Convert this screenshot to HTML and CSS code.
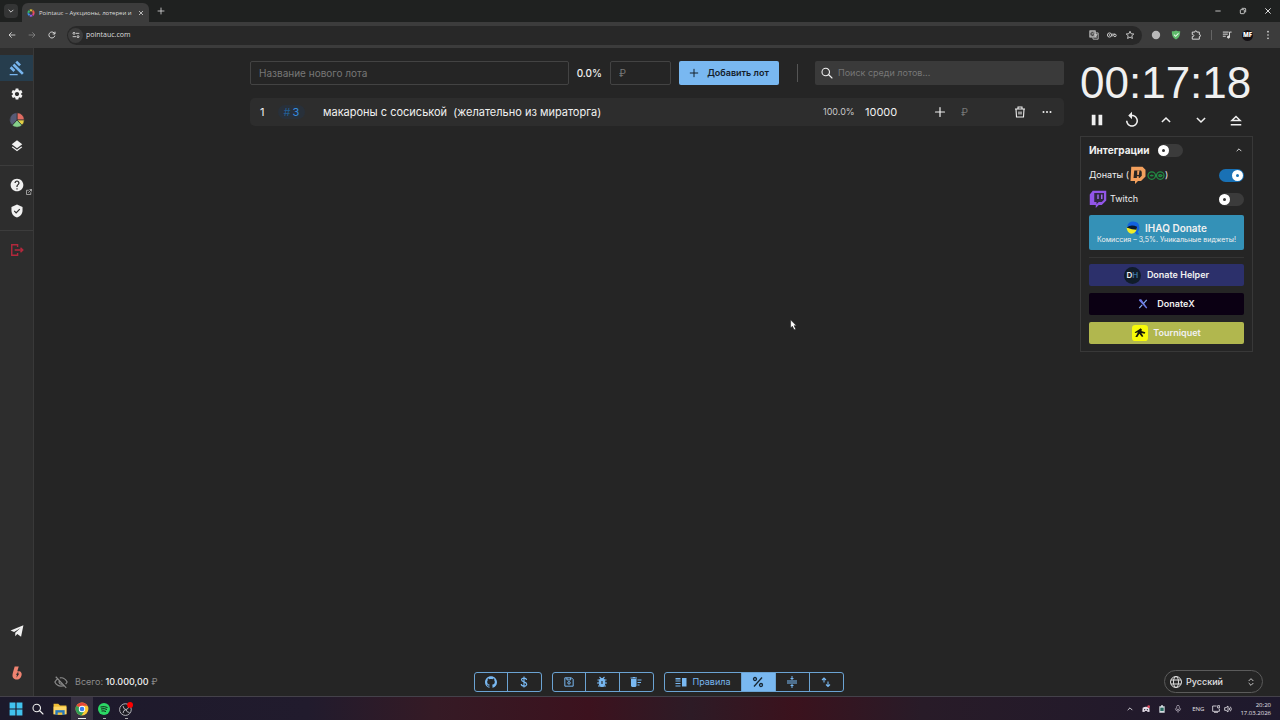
FILE: index.html
```html
<!DOCTYPE html>
<html lang="ru">
<head>
<meta charset="utf-8">
<title>Pointauc – Аукционы, лотереи и</title>
<link rel="stylesheet" href="styles.css">
</head>
<body>
<svg class="defs" aria-hidden="true">
  <symbol id="plus" viewBox="0 0 24 24"><path d="M12 3v18M3 12h18" fill="none" stroke="currentColor" stroke-width="2.400" stroke-linecap="round"/></symbol>
  <symbol id="close" viewBox="0 0 24 24"><path d="M4 4l16 16M20 4L4 20" fill="none" stroke="currentColor" stroke-width="3"/></symbol>
  <symbol id="up" viewBox="0 0 24 24"><path d="M5 15.500l7-7 7 7" fill="none" stroke="currentColor" stroke-width="2.600"/></symbol>
  <symbol id="down" viewBox="0 0 24 24"><path d="M5 8.500l7 7 7-7" fill="none" stroke="currentColor" stroke-width="2.600"/></symbol>
  <symbol id="search" viewBox="0 0 24 24"><path d="M15.500 15.500L22 22M17 10a7.500 7.500 0 1 1-15 0 7.500 7.500 0 0 1 15 0z" fill="none" stroke="currentColor" stroke-width="2.200" stroke-linecap="round"/></symbol>
</svg>

<header class="browser">
  <div class="tabs">
    <button class="tab-search" aria-label="Поиск вкладок"><svg class="i8"><use href="#down"/></svg></button>
    <div class="tab">
      <svg class="i8" viewBox="0 0 24 24" fill="none" stroke-width="6"><circle cx="12" cy="12" r="8" stroke="#e0447c" stroke-dasharray="7 43.300"/><circle cx="12" cy="12" r="8" stroke="#8c5ae0" stroke-dasharray="7 43.300" stroke-dashoffset="-8.400"/><circle cx="12" cy="12" r="8" stroke="#3b8ee8" stroke-dasharray="7 43.300" stroke-dashoffset="-16.800"/><circle cx="12" cy="12" r="8" stroke="#35b96d" stroke-dasharray="7 43.300" stroke-dashoffset="-25.100"/><circle cx="12" cy="12" r="8" stroke="#d8bd3b" stroke-dasharray="7 43.300" stroke-dashoffset="-33.500"/><circle cx="12" cy="12" r="8" stroke="#e55b45" stroke-dasharray="7 43.300" stroke-dashoffset="-41.900"/></svg>
      <span class="tab-title">Pointauc – Аукционы, лотереи и</span>
      <button aria-label="Закрыть вкладку"><svg class="i6"><use href="#close"/></svg></button>
    </div>
    <button class="new-tab" aria-label="Новая вкладка"><svg class="i8"><use href="#plus"/></svg></button>
    <div class="window-buttons">
      <button aria-label="Свернуть"><svg class="i8" viewBox="0 0 24 24"><path d="M4 12h16" stroke="currentColor" stroke-width="2.500"/></svg></button>
      <button aria-label="Развернуть"><svg class="i8" viewBox="0 0 24 24" fill="none" stroke="currentColor" stroke-width="2.500"><rect x="4" y="8" width="12" height="12" rx="2"/><path d="M8 4h10a2 2 0 0 1 2 2v10"/></svg></button>
      <button aria-label="Закрыть"><svg class="i8"><use href="#close"/></svg></button>
    </div>
  </div>
  <div class="toolbar">
    <div class="nav-buttons">
      <button aria-label="Назад"><svg class="i8" viewBox="0 0 24 24" fill="none" stroke="currentColor" stroke-width="2.500"><path d="M22 12H3M11 4l-8 8 8 8"/></svg></button>
      <button class="dim" aria-label="Вперёд"><svg class="i8" viewBox="0 0 24 24" fill="none" stroke="currentColor" stroke-width="2.500"><path d="M2 12h19M13 4l8 8-8 8"/></svg></button>
      <button aria-label="Обновить"><svg class="i8" viewBox="0 0 24 24" fill="none" stroke="currentColor" stroke-width="2.800"><path d="M20.500 14a9 9 0 1 1-2.500-8.500L21 8M21 2v7h-7"/></svg></button>
    </div>
    <div class="address">
      <span class="site-info"><svg class="i8" viewBox="0 0 24 24" fill="none" stroke="currentColor" stroke-width="2.600"><circle cx="6" cy="7" r="3"/><path d="M12 7h10M2 17h10"/><circle cx="18" cy="17" r="3"/></svg></span>
      <input class="url" aria-label="Адрес" value="pointauc.com">
      <div class="address-icons">
        <svg class="i10" viewBox="0 0 24 24" fill="none" stroke="currentColor" stroke-width="2"><rect x="2" y="2" width="13" height="15" fill="#8d8d8d"/><path d="M15 7h7v15H10l-1-4M13 11h7M16.500 9v2M19 11q-2 6-5 7M14 12q2 4 5 6"/><path d="M11 7.500a3.500 3.500 0 1 0 0 4H8.500" stroke="#282828"/></svg>
        <svg class="i10" viewBox="0 0 24 24" fill="none" stroke="currentColor" stroke-width="2.400"><circle cx="6" cy="12" r="5"/><circle cx="6" cy="12" r="1"/><path d="M11 10h8M11 14h3l1-1"/><circle cx="19" cy="13" r="3"/></svg>
        <svg class="i10" viewBox="0 0 24 24" fill="none" stroke="currentColor" stroke-width="2.300"><path d="M12 3l2.700 6 6.500.600-4.900 4.300 1.500 6.400L12 17l-5.800 3.300 1.500-6.400-4.900-4.300 6.500-.600z"/></svg>
      </div>
    </div>
    <div class="extensions">
      <svg class="i10" viewBox="0 0 24 24"><circle cx="12" cy="12" r="10" fill="#b9b9b9"/></svg>
      <svg class="i10" viewBox="0 0 24 24"><path d="M12 1c4 2 7 2 10 2 0 10-2 15-10 20C4 18 2 13 2 3c3 0 6 0 10-2z" fill="#5fbb6b"/><path d="M7 11l4 4 7-7" fill="none" stroke="#e7f7e8" stroke-width="2.500"/></svg>
      <svg class="i10" viewBox="0 0 24 24" fill="none" stroke="currentColor" stroke-width="2.300"><path d="M3 5h6q0-3 2.500-3T14 5h6v6q3 0 3 2.500T20 16v6H3v-6q4 0 4-2.500T3 11z"/></svg>
      <span class="bar"></span>
      <svg class="i10" viewBox="0 0 24 24" fill="none" stroke="currentColor" stroke-width="2.300"><path d="M2 5h14M2 10h12M2 15h7M18 17V5h5"/><circle cx="15.500" cy="17" r="2.500" fill="currentColor"/></svg>
      <span class="avatar">MF</span>
      <svg class="i10" viewBox="0 0 24 24" fill="currentColor"><circle cx="12" cy="4" r="2"/><circle cx="12" cy="12" r="2"/><circle cx="12" cy="20" r="2"/></svg>
    </div>
  </div>
</header>

<div class="app">
  <nav class="sidebar">
    <a class="side active" href="#" aria-label="Аукцион"><svg class="i16" viewBox="0 0 24 24" fill="currentColor"><path d="M1 21h12v2H1zM5.245 8.070l2.830-2.827 14.140 14.142-2.828 2.828zM12.317 1l5.657 5.656-2.830 2.830-5.654-5.660zM3.825 9.485l5.657 5.657-2.828 2.828-5.657-5.657z"/></svg></a>
    <a class="side" href="#" aria-label="Настройки"><svg class="i14" viewBox="0 0 24 24" fill="currentColor"><path d="M19.140 12.940c.040-.300.060-.610.060-.940 0-.320-.020-.640-.070-.940l2.030-1.580c.180-.140.230-.410.120-.610l-1.920-3.320c-.120-.220-.370-.290-.590-.220l-2.390.960c-.500-.380-1.030-.700-1.620-.940l-.360-2.540c-.040-.240-.240-.410-.480-.410h-3.840c-.240 0-.430.170-.470.410l-.360 2.540c-.590.240-1.130.570-1.620.940l-2.390-.960c-.220-.080-.470 0-.590.220L2.740 8.870c-.120.210-.080.470.120.610l2.030 1.580c-.050.300-.090.630-.090.940s.020.640.070.940l-2.030 1.580c-.180.140-.230.410-.120.610l1.920 3.320c.120.220.370.290.590.220l2.390-.960c.500.380 1.030.700 1.620.940l.360 2.540c.050.240.240.410.480.410h3.840c.240 0 .440-.170.470-.410l.360-2.540c.590-.240 1.130-.560 1.620-.940l2.390.960c.220.080.470 0 .590-.220l1.920-3.320c.120-.220.070-.470-.120-.610l-2.010-1.580zM12 15.600c-1.980 0-3.600-1.620-3.600-3.600s1.620-3.600 3.600-3.600 3.600 1.620 3.600 3.600-1.620 3.600-3.600 3.600z"/></svg></a>
    <a class="side" href="#" aria-label="Колесо"><svg class="i16" viewBox="0 0 24 24" stroke="#2d2d2d"><path d="M12 12V1a11 11 0 0 1 11 11z" fill="#e06c62"/><path d="M12 12h11a11 11 0 0 1-3.500 8z" fill="#e3cf45"/><path d="M12 12l7.500 8a11 11 0 0 1-15 0z" fill="#85cf8a"/><path d="M12 12l-7.500 8A11 11 0 0 1 12 1z" fill="#555a76"/></svg></a>
    <a class="side" href="#" aria-label="Слои"><svg class="i14" viewBox="0 0 24 24" fill="currentColor"><path d="M11.990 18.540l-7.370-5.730L3 14.070l9 7 9-7-1.630-1.270-7.380 5.740zM12 16l7.360-5.730L21 9l-9-7-9 7 1.630 1.270L12 16z"/></svg></a>
    <hr>
    <a class="side" href="#" aria-label="Помощь"><svg class="i14" viewBox="1 1 22 22" fill="currentColor"><path d="M12 2C6.480 2 2 6.480 2 12s4.480 10 10 10 10-4.480 10-10S17.520 2 12 2zm1 17h-2v-2h2v2zm2.070-7.750l-.900.920C13.450 12.900 13 13.500 13 15h-2v-.500c0-1.100.450-2.100 1.170-2.830l1.240-1.260c.370-.360.590-.860.590-1.410 0-1.100-.900-2-2-2s-2 .900-2 2H8c0-2.210 1.790-4 4-4s4 1.790 4 4c0 .880-.360 1.680-.930 2.250z"/></svg><svg class="external" viewBox="0 0 24 24" fill="none" stroke="currentColor" stroke-width="3"><path d="M11 5H2v17h17v-9M9 15L22 2M14 2h8v8"/></svg></a>
    <a class="side" href="#" aria-label="Безопасность"><svg class="i14" viewBox="0 0 24 24" fill="currentColor"><path d="M12 1L2.500 5v6c0 5.550 4 10.740 9.500 12 5.500-1.260 9.500-6.450 9.500-12V5zM10.500 16.500l-4-4L8 11l2.500 2.500L16 8l1.500 1.500z"/></svg></a>
    <hr>
    <a class="side logout" href="#" aria-label="Выйти"><svg class="i14" viewBox="0 0 24 24" fill="none" stroke="currentColor" stroke-width="2.400"><path d="M13 7V3H3v18h10v-4M8 12h14M18 8l4 4-4 4"/></svg></a>
    <span class="grow"></span>
    <a class="side" href="#" aria-label="Telegram"><svg class="i14" viewBox="0 0 24 24" fill="currentColor"><path d="M1 11L23 2l-4 20-6.500-5-3.500 4v-6L18 7 7 13.500z"/></svg></a>
    <a class="side boosty" href="#" aria-label="Boosty"><svg class="i14" viewBox="0 0 24 24"><path d="M8 1h7l-2.500 8H16c5 1 5 7 2 11-3 4-9 4-12 1-4-4 0-12 2-20z" fill="#ef8371"/><path d="M14 10l-4 5h2l-1 5 5-7h-3l2-3z" fill="#2d2d2d"/></svg></a>
  </nav>

  <main class="content">
    <div class="workspace">
      <section class="lots">
        <form class="lot-form">
          <input class="field name" type="text" placeholder="Название нового лота" aria-label="Название нового лота">
          <span class="chance">0.0%</span>
          <input class="field price" type="text" placeholder="₽" aria-label="Стоимость">
          <button class="add" type="button"><svg class="i10"><use href="#plus"/></svg>Добавить лот</button>
          <span class="separator"></span>
          <label class="search"><svg class="i12"><use href="#search"/></svg><input type="text" placeholder="Поиск среди лотов..." aria-label="Поиск среди лотов"></label>
        </form>
        <article class="lot">
          <span class="rank">1</span>
          <span class="lot-id"><span>#</span>3</span>
          <span class="lot-name">макароны с сосиськой  (желательно из мираторга)</span>
          <span class="percent">100.0%</span>
          <span class="amount">10000</span>
          <button aria-label="Прибавить"><svg class="i12"><use href="#plus"/></svg></button>
          <input class="extra" type="text" placeholder="₽" aria-label="Сумма">
          <button aria-label="Удалить"><svg class="i12" viewBox="0 0 24 24" fill="none" stroke="currentColor" stroke-width="2.200"><path d="M2 6h20M8 6V2h8v4M4 6l1 16h14l1-16M10 11v6M14 11v6"/></svg></button>
          <button class="more" aria-label="Ещё"><svg class="i12" viewBox="0 0 24 24" fill="currentColor"><circle cx="5" cy="12" r="2"/><circle cx="12" cy="12" r="2"/><circle cx="19" cy="12" r="2"/></svg></button>
        </article>
      </section>

      <aside class="side-panel">
        <div class="timer">00:17:18</div>
        <div class="timer-buttons">
          <button aria-label="Пауза"><svg class="i18" viewBox="0 0 24 24" fill="currentColor"><path d="M5 5h5v14H5zM14 5h5v14h-5z"/></svg></button>
          <button aria-label="Сбросить"><svg class="i18" viewBox="0 0 24 24" fill="currentColor"><path d="M12 5V1L7 6l5 5V7c3.310 0 6 2.690 6 6s-2.690 6-6 6-6-2.690-6-6H4c0 4.420 3.580 8 8 8s8-3.580 8-8-3.580-8-8-8z"/></svg></button>
          <button aria-label="Больше"><svg class="i14"><use href="#up"/></svg></button>
          <button aria-label="Меньше"><svg class="i14"><use href="#down"/></svg></button>
          <button aria-label="Удвоить"><svg class="i14" viewBox="0 0 24 24" fill="none" stroke="currentColor" stroke-width="2.600"><path d="M5 13l7-7 7 7zM3 20h18"/></svg></button>
        </div>
        <section class="integrations">
          <div class="int-row title-row"><label for="all">Интеграции</label><input class="switch" id="all" type="checkbox"><button aria-label="Свернуть панель"><svg class="i8"><use href="#up"/></svg></button></div>
          <div class="int-row">
            <label for="donates">Донаты (<svg class="i18" viewBox="0 0 24 24"><path d="M3 1h15l4 4v9l-6 6h-4l-4 4v-4H2z" fill="#f3a05d"/><path d="M7 6h9l1 2v5l-3 3H6z" fill="#292421"/><path d="M11 6h3l-1 6h-2zM10.500 13.500h2.500V16h-2.500z" fill="#f3a05d"/></svg><svg class="loops" viewBox="0 0 36 18" fill="none" stroke="#218c43" stroke-width="2.500"><circle cx="9.500" cy="9" r="7.500"/><circle cx="26.500" cy="9" r="7.500"/><path d="M6 9h7M9.500 7v4M23 9q3.500-4 7 0-3.500 4-7 0"/></svg>)</label>
            <input class="switch" id="donates" type="checkbox" checked>
          </div>
          <div class="int-row">
            <label for="twitch"><svg class="i18" viewBox="0 0 24 24"><path d="M5 1h18v13l-6 6h-4l-4 4v-4H1V6z" fill="#9255e8"/><path d="M7 4h13v9l-3 3h-4l-3 3v-3H7z" fill="#302841"/><path d="M12 6v6M17 6v6" stroke="#9b6ae8" stroke-width="2"/></svg><span class="twitch-name">Twitch</span></label>
            <input class="switch" id="twitch" type="checkbox">
          </div>
          <button class="service ihaq"><span class="service-name"><svg class="i14" viewBox="0 0 24 24"><path d="M2 9Q4 1 12 1q11 0 11 11 0 5-3 7l3 4h-5L9 10z" fill="#1262df"/><path d="M1 11h18q-1 10-10 11Q2 20 1 11z" fill="#f1ec2a"/><path d="M1 11Q9 5 19 10l-1 5-8-1z" fill="#071934"/></svg>IHAQ Donate</span><small>Комиссия – 3,5%. Уникальные виджеты!</small></button>
          <hr>
          <button class="service helper"><span class="dh">D<i>H</i></span>Donate Helper</button>
          <button class="service donatex"><svg class="i10" viewBox="0 0 24 24" fill="none" stroke-width="3"><path d="M3 2l18 20M3 2h4l14 20" stroke="#6d79e8"/><path d="M21 2l-8 9M10 14l-7 8" stroke="#7fa9ee"/></svg>DonateX</button>
          <button class="service tourniquet"><svg class="i16" viewBox="0 0 24 24"><rect width="24" height="24" rx="5" fill="#f8fa08"/><path d="M4 11l6-4 3-2 2 2-1 2 6 2-1 2-5-1 3 5-2 1-4-5-3 5H5l4-7-4 1z" fill="#16180c"/></svg>Tourniquet</button>
        </section>
      </aside>
    </div>

    <svg class="cursor" viewBox="0 0 12 18"><path d="M1 1v14l3-3 3 6 3-1-3-6h4z" fill="#fff" stroke="#222"/></svg>

    <footer class="footer">
      <div class="total"><svg class="i14" viewBox="0 0 24 24" fill="none" stroke="currentColor" stroke-width="2"><path d="M3 3l18 19M7 6C4 8 2 11 1.500 12c2 4 5.500 7 10.500 7 2 0 4-.500 5.500-1.500M10 5q8-1.500 12.500 7l-2.500 3.500M9 10a4 4 0 0 0 5 5.500"/></svg><span>Всего: <b>10.000,00</b> ₽</span></div>
      <div class="actions">
        <div class="group">
          <button aria-label="GitHub"><svg class="i12" viewBox="0 0 24 24" fill="currentColor"><path d="M12 .297c-6.630 0-12 5.373-12 12 0 5.303 3.438 9.800 8.205 11.385.600.113.820-.258.820-.577 0-.285-.010-1.040-.015-2.040-3.338.724-4.042-1.610-4.042-1.610C4.422 18.070 3.633 17.700 3.633 17.700c-1.087-.744.084-.729.084-.729 1.205.084 1.838 1.236 1.838 1.236 1.070 1.835 2.809 1.305 3.495.998.108-.776.417-1.305.760-1.605-2.665-.300-5.466-1.332-5.466-5.930 0-1.310.465-2.380 1.235-3.220-.135-.303-.540-1.523.105-3.176 0 0 1.005-.322 3.300 1.230.960-.267 1.980-.399 3-.405 1.020.006 2.040.138 3 .405 2.280-1.552 3.285-1.230 3.285-1.230.645 1.653.240 2.873.120 3.176.765.840 1.230 1.910 1.230 3.220 0 4.610-2.805 5.625-5.475 5.920.420.360.810 1.096.810 2.220 0 1.606-.015 2.896-.015 3.286 0 .315.210.690.825.570C20.565 22.092 24 17.592 24 12.297c0-6.627-5.373-12-12-12"/></svg></button>
          <button aria-label="Поддержать"><svg class="i12" viewBox="0 0 24 24" fill="none" stroke="currentColor" stroke-width="2.300"><path d="M17 8c0-5-10-5-10-.500 0 5 10.500 3.500 10.500 9 0 5-11 5-11-.500M12 1v22"/></svg></button>
        </div>
        <div class="group">
          <button aria-label="Сохранить"><svg class="i10" viewBox="0 0 24 24" fill="none" stroke="currentColor" stroke-width="2.400"><path d="M2 2h16l4 4v16H2zM7 2v5h9V2"/><circle cx="12" cy="14" r="3"/></svg></button>
          <button aria-label="Сообщить об ошибке"><svg class="i12" viewBox="0 0 24 24" fill="none" stroke="currentColor" stroke-width="2.200"><ellipse cx="12" cy="13" rx="5.500" ry="8" fill="currentColor"/><path d="M7 2l4 4M17 2l-4 4M3 8h18M2 14h20M4 20h16"/><path d="M12 10v6" stroke="#252525"/></svg></button>
          <button aria-label="Очистить"><svg class="i12" viewBox="0 0 24 24" fill="currentColor"><path d="M2 6h11v14l-2 2H4l-2-2zM1 3h4l1-1h4l1 1h3v2H1zM15 7h8v2h-8zM15 12h7v2h-7zM15 17h4v2h-4z"/></svg></button>
        </div>
        <div class="group">
          <button class="rules"><svg class="i12" viewBox="0 0 24 24" fill="currentColor"><path d="M1 4h10v3H1zM1 9h10v2H1zM1 14h10v2H1zM1 19h10v2H1zM14 4h9v17h-9z"/></svg>Правила</button>
          <button class="selected" aria-label="Проценты"><svg class="i12" viewBox="0 0 24 24" fill="none" stroke="currentColor" stroke-width="2.600"><path d="M20 3L4 21"/><circle cx="6" cy="6" r="3"/><circle cx="18" cy="18" r="3"/></svg></button>
          <button aria-label="Компактный вид"><svg class="i12" viewBox="0 0 24 24" fill="currentColor"><path d="M2 9h20v2H2zM2 13h20v2H2zM11 0h2v4h3l-4 4-4-4h3zM11 24h2v-4h3l-4-4-4 4h3z"/></svg></button>
          <button aria-label="Сортировка"><svg class="i12" viewBox="0 0 24 24" fill="none" stroke="currentColor" stroke-width="2.200"><path d="M8 13V4M4 8l4-4 4 4M16 11v10M12 17l4 4 4-4"/></svg></button>
        </div>
      </div>
      <label class="language"><svg class="i12" viewBox="0 0 24 24" fill="none" stroke="currentColor" stroke-width="2"><circle cx="12" cy="12" r="11"/><ellipse cx="12" cy="12" rx="5" ry="11"/><path d="M2 8h20M2 16h20"/></svg><select aria-label="Язык"><option>Русский</option></select><svg class="i8" viewBox="0 0 24 24" fill="none" stroke="currentColor" stroke-width="2.600"><path d="M5 9l7-7 7 7M5 15l7 7 7-7"/></svg></label>
    </footer>
  </main>
</div>

<footer class="taskbar">
  <div class="tasks">
    <button aria-label="Пуск"><svg class="i14" viewBox="0 0 24 24" fill="#41c2ee"><path d="M1 1h10v10H1zM13 1h10v10H13zM1 13h10v10H1zM13 13h10v10H13z"/></svg></button>
    <button aria-label="Поиск"><svg class="i12"><use href="#search"/></svg></button>
    <button aria-label="Проводник"><svg class="i14" viewBox="0 0 24 24"><path d="M1 3h8l3 3h11v15H1z" fill="#f1bd35"/><path d="M1 8h22v13H1z" fill="#ffd767"/><path d="M4 14h16v8H4z" fill="#2476ba"/><path d="M8 18h8v4H8z" fill="#f1bd35"/></svg></button>
    <button class="open" aria-label="Chrome"><svg class="i14" viewBox="0 0 24 24"><circle cx="12" cy="12" r="11" fill="#fbc934"/><path d="M12 12L2.500 6.500A11 11 0 0 1 21.500 6.500H12z" fill="#e74638"/><path d="M2.500 6.500A11 11 0 0 0 11 23l6-9-5-2z" fill="#319e57"/><circle cx="12" cy="12" r="5.500" fill="#fff"/><circle cx="12" cy="12" r="4" fill="#3a7fed"/></svg></button>
    <button class="running" aria-label="Spotify"><svg class="i12" viewBox="0 0 24 24"><circle cx="12" cy="12" r="12" fill="#2bd865"/><path d="M5 8q8-2 14 1M6 12q7-2 12 1M7 16q5-1 9 1" fill="none" stroke="#162119" stroke-width="2"/></svg></button>
    <button class="running" aria-label="OBS"><svg class="i14" viewBox="0 0 24 24" fill="none" stroke="#bcbcc2" stroke-width="1.600"><circle cx="11" cy="13" r="10" fill="#1c1b23"/><path d="M7 7q1 6 5 6 4-1 5-5M12 13q-5 1-5 6M12 13q1 5 6 5"/><circle cx="19" cy="5" r="5" fill="#f00" stroke="none"/></svg></button>
  </div>
  <div class="tray">
    <svg class="i8"><use href="#up"/></svg>
    <svg class="i8" viewBox="0 0 24 24"><path d="M2 8q10-6 20 0l1 12-6 1-2-3H9l-2 3-6-1z" fill="#e3dce6"/><circle cx="8" cy="14" r="2" fill="#292333"/><circle cx="16" cy="14" r="2" fill="#292333"/><circle cx="20" cy="5" r="4" fill="#e34e63"/></svg>
    <svg class="i8" viewBox="0 0 24 24"><path d="M4 4h16v19H4zM9 1h6v4H9z" fill="#d4dce0"/><path d="M7 8h10v10H7z" fill="#26695f"/></svg>
    <svg class="i8" viewBox="0 0 24 24" fill="none" stroke="#a59dac" stroke-width="2.500"><rect x="8" y="1" width="8" height="13" rx="4"/><path d="M4 10q0 8 8 8t8-8M12 18v5"/></svg>
    <span class="eng">ENG</span>
    <span class="sound"><svg class="i8" viewBox="0 0 24 24" fill="none" stroke="currentColor" stroke-width="2.500"><path d="M14 3H2v16h20v-7M6 22h12M17 2h6v7h-6z"/></svg><svg class="i8" viewBox="0 0 24 24" fill="none" stroke="currentColor" stroke-width="2.500"><path d="M2 8h4l6-5v18l-6-5H2zM15 8q4 4 0 8M19 5q6 7 0 14"/></svg></span>
    <time>20:20<br>17.03.2026</time>
  </div>
</footer>
</body>
</html>
```
FILE: styles.css
```css
* { box-sizing: border-box; }
body {
  margin: 0;
  height: 100vh;
  display: flex;
  flex-direction: column;
  background: #252525;
  color: #f0f0f0;
  font-family: Inter, "Liberation Sans", sans-serif;
  font-size: 9px;
  line-height: 14px;
  overflow: hidden;
}
button, input, select { font: inherit; color: inherit; background: none; border: 0; margin: 0; padding: 0; min-width: 0; outline: 0; }
button { display: inline-flex; align-items: center; justify-content: center; flex: none; }
a { color: inherit; }
svg { display: block; flex: none; }
hr { width: 100%; margin: 0; border: 0; border-top: 1px solid #3c3c3c; }
.defs { display: none; }
.i6 { width: 6px; height: 6px; }
.i8 { width: 8px; height: 8px; }
.i10 { width: 10px; height: 10px; }
.i12 { width: 12px; height: 12px; }
.i14 { width: 14px; height: 14px; }
.i16 { width: 16px; height: 16px; }
.i18 { width: 18px; height: 18px; }

/* Browser chrome */
.browser { font-family: "Open Sans", "Noto Sans", sans-serif; color: #dedede; flex: none; }
.tabs { height: 22px; background: #1f2120; display: flex; align-items: center; padding-left: 4px; }
.tab-search { width: 14px; height: 14px; border-radius: 4px; background: #343535; }
.tab { align-self: flex-end; width: 127px; height: 19px; margin-left: 4px; padding: 0 5px; background: #3c3c3c; border-radius: 6px 6px 0 0; display: flex; align-items: center; gap: 4px; }
.tab-title { flex: 1; white-space: nowrap; font-size: 6px; }
.new-tab { margin-left: 8px; }
.window-buttons { margin-left: auto; display: flex; gap: 17px; padding-right: 8px; }
.toolbar { height: 26px; background: #3c3c3c; display: flex; align-items: center; }
.nav-buttons { display: flex; gap: 12px; padding: 0 11px 0 8px; }
.dim { color: #858585; }
.address { flex: 1; height: 19px; border-radius: 10px; background: #282828; display: flex; align-items: center; padding: 0 7px 0 1px; }
.site-info { width: 15px; height: 15px; border-radius: 8px; background: #3c3c3c; display: flex; align-items: center; justify-content: center; }
.url { flex: 1; font-size: 7px; padding-left: 3px; }
.address-icons { display: flex; gap: 8px; color: #c9c9c9; }
.extensions { display: flex; align-items: center; gap: 10px; padding: 0 7px 0 9px; }
.bar { width: 1px; height: 10px; background: #656565; }
.avatar { width: 11px; height: 11px; border-radius: 6px; background: #141014; color: #fff; font-size: 6px; line-height: 11px; font-weight: 800; text-align: center; }

/* Navigation */
.app { flex: 1; min-height: 0; display: flex; }
.sidebar { width: 34px; flex: none; background: #2d2d2d; border-right: 1px solid #393939; display: flex; flex-direction: column; padding: 7px 0 10px; }
.side { height: 26px; flex: none; display: flex; align-items: center; justify-content: center; position: relative; }
.active { background: #263d4d; color: #78b5ed; }
.sidebar hr { margin: 6px 0; }
.external { position: absolute; right: 1px; bottom: 3px; width: 6px; height: 6px; color: #c0c0c0; }
.logout { color: #b3283c; }
.grow { flex: 1; }
.boosty { margin-top: 16px; }

/* Lots */
.content { flex: 1; min-width: 0; display: flex; flex-direction: column; position: relative; }
.workspace { flex: 1; display: flex; align-items: flex-start; gap: 16px; padding: 13px 27px 0 216px; }
.lots { flex: 1; min-width: 0; display: flex; flex-direction: column; gap: 13px; }
.lot-form { display: flex; align-items: center; gap: 8px; height: 24px; }
.field { height: 24px; border: 1px solid #434343; border-radius: 2px; padding: 0 8px; font-size: 10px; }
.name { flex: 1; }
.chance { font-size: 10px; font-weight: 500; }
.price { width: 61px; }
::placeholder { color: #777; opacity: 1; }
.add { width: 100px; height: 24px; border-radius: 2px; background: #79b8f1; color: #14202b; font-weight: 600; gap: 8px; }
.separator { width: 1px; height: 18px; background: #555; margin: 0 9px 0 10px; }
.search { width: 249px; height: 24px; background: #3a3a3a; border-radius: 2px; display: flex; align-items: center; gap: 5px; padding: 0 6px; }
.search input { flex: 1; }
.lot { height: 28px; border-radius: 5px; background: #2d2d2d; display: flex; align-items: center; padding: 0 11px 0 10px; font-size: 11px; }
.rank { width: 18px; }
.lot-id { width: 27px; height: 14px; border-radius: 7px; background: #28303a; color: #348de0; text-align: center; }
.lot-id span { color: #235f95; padding-right: 2px; }
.lot-name { flex: 1; white-space: pre; padding-left: 18px; }
.percent { font-size: 9px; color: #c8c8c8; width: 42px; }
.amount { width: 69px; }
.extra { width: 53px; font-size: 10px; margin: 0 0 0 15px; }
.more { margin-left: 15px; }

/* Timer and integrations */
.side-panel { width: 173px; flex: none; }
.timer { font-family: "Liberation Sans", Arial, sans-serif; font-size: 44px; line-height: 44px; }
.timer-buttons { display: grid; grid-template-columns: repeat(5, 1fr); height: 27px; margin-top: 1px; }
.integrations { border: 1px solid #383838; margin-top: 3px; padding: 6px 8px 7px; display: flex; flex-direction: column; }
.int-row { height: 24px; display: flex; align-items: center; justify-content: space-between; }
.int-row label { display: flex; align-items: center; }
.title-row { height: 14px; margin-bottom: 6px; font-weight: 700; font-size: 10px; }
.title-row .switch { margin: 0 auto 0 9px; }
.loops { width: 18px; height: 9px; }
.title-row button { margin-right: 1px; }
.twitch-name { padding-left: 3px; }
.switch { appearance: none; flex: none; width: 25px; height: 13px; border-radius: 7px; background: #3b3b3b; display: flex; align-items: center; }
.switch::before { content: ""; box-sizing: border-box; width: 11px; height: 11px; border-radius: 6px; border: 4px solid #fff; background: #333; }
.switch:checked { background: #1971b5; justify-content: flex-end; padding-right: 1px; }
.switch:checked::before { background: #1971b5; }
.service { height: 22px; border-radius: 2px; font-weight: 600; gap: 6px; margin-bottom: 7px; }
.service-name { display: flex; align-items: center; gap: 5px; font-size: 10px; }
.ihaq { flex-direction: column; gap: 0; height: 35px; margin-top: 4px; background: #3491b7; }
.ihaq small { font-size: 7px; line-height: 10px; font-weight: 400; }
.integrations hr { margin-bottom: 6px; border-color: #343434; }
.helper { background: #2c306b; }
.donatex { background: #0b0013; gap: 9px; }
.tourniquet { background: #b1b74e; gap: 5px; margin-bottom: 0; }
.dh { width: 17px; height: 17px; border-radius: 9px; background: #101c29; font-size: 8px; line-height: 17px; text-align: center; }
.dh i { font-style: normal; color: #3c75a0; }
.cursor { position: absolute; left: 756px; top: 271px; width: 7px; height: 11px; }

/* Footer */
.footer { display: grid; grid-template-columns: 1fr auto 1fr; align-items: center; padding: 0 17px 3px 20px; }
.total { display: flex; align-items: center; gap: 7px; color: #8b8b8b; }
.total b { color: #f0f0f0; font-weight: 500; }
.actions { display: flex; gap: 10px; }
.group { display: flex; border: 1px solid #6ba3d3; border-radius: 3px; color: #79b8f1; height: 20px; }
.group button { width: 32px; height: 18px; }
.group button + button { border-left: 1px solid #6ba3d3; width: 34px; }
.group .rules { width: 76px; gap: 6px; }
.group .selected { background: #79b8f1; color: #172633; }
.language { justify-self: end; width: 99px; height: 23px; border: 1px solid #5b5b5b; border-radius: 12px; display: flex; align-items: center; gap: 4px; padding: 0 7px 0 5px; color: #e0e0e0; }
.language select { flex: 1; appearance: none; font-weight: 500; }

/* Desktop taskbar */
.taskbar { height: 24px; flex: none; border-top: 1px solid #44414a; background: linear-gradient(90deg, #1c192b, #211b2d 24%, #351a25 34%, #3c121e 46%, #2d1b26 54%, #3b121d 62%, #281b28 72%, #1e192d); display: flex; justify-content: space-between; font-family: "Open Sans", "Noto Sans", sans-serif; }
.tasks { display: flex; padding-left: 5px; }
.tasks button { width: 22px; position: relative; }
.open { background: #373141; }
.open::after, .running::after { content: ""; position: absolute; bottom: 1px; width: 3px; height: 1px; background: #aaa; }
.open::after { width: 8px; background: #eee; }
.tray { display: flex; align-items: center; gap: 8px; padding-right: 9px; color: #e4e2e8; font-size: 6px; line-height: 8px; }
.eng { padding-left: 2px; }
.sound { display: flex; gap: 4px; }
.tray time { text-align: right; }
```
